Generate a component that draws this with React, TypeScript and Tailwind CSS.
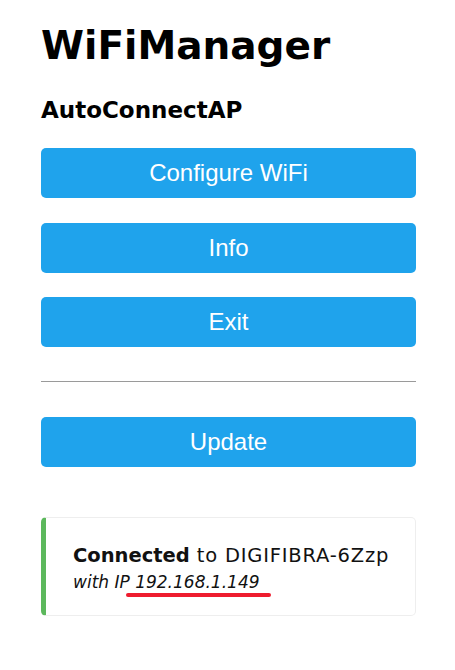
import React from "react";

const buttons = ["Configure WiFi", "Info", "Exit"];

function MenuButton({ label }: { label: string }) {
  return (
    <button className="block w-full h-[50px] rounded-[5px] bg-[#1fa3ec] text-white text-[24px] leading-[50px] font-['Liberation_Sans',Arial,sans-serif] text-center">
      {label}
    </button>
  );
}

export default function App() {
  return (
    <div className="min-h-screen bg-white text-black font-['DejaVu_Sans',Verdana,sans-serif]">
      <div className="pl-[41px] pr-[39px] pt-[22px] pb-10">
        <h1 className="text-[39px] leading-[48px] font-bold">WiFiManager</h1>
        <h3 className="mt-[26px] text-[23px] leading-[28px] font-bold">AutoConnectAP</h3>

        <div className="mt-[24px] flex flex-col gap-[24.5px]">
          {buttons.map((b) => (
            <MenuButton key={b} label={b} />
          ))}
        </div>

        <hr className="mt-[34px] border-0 border-t border-[#9a9a9a]" />

        <div className="mt-[35px]">
          <MenuButton label="Update" />
        </div>

        <div className="mt-[50px] h-[99px] rounded-[5px] border border-[#eeeeee] border-l-[5px] border-l-[#5cb85c] pl-[27px] pt-[26px]">
          <div className="text-[19.5px] leading-[24px] text-[#111]">
            <strong className="font-bold">Connected</strong>
            <span className="tracking-[0.8px]"> to DIGIFIBRA-6Zzp</span>
          </div>
          <div className="text-[17px] leading-[28px] italic text-[#111]">
            with IP{" "}
            <span className="relative">
              192.168.1.149
              <span className="absolute left-[-9px] right-[-11px] bottom-[-5px] h-[4px] rounded-full bg-[#ee1c2e]" />
            </span>
          </div>
        </div>
      </div>
    </div>
  );
}
